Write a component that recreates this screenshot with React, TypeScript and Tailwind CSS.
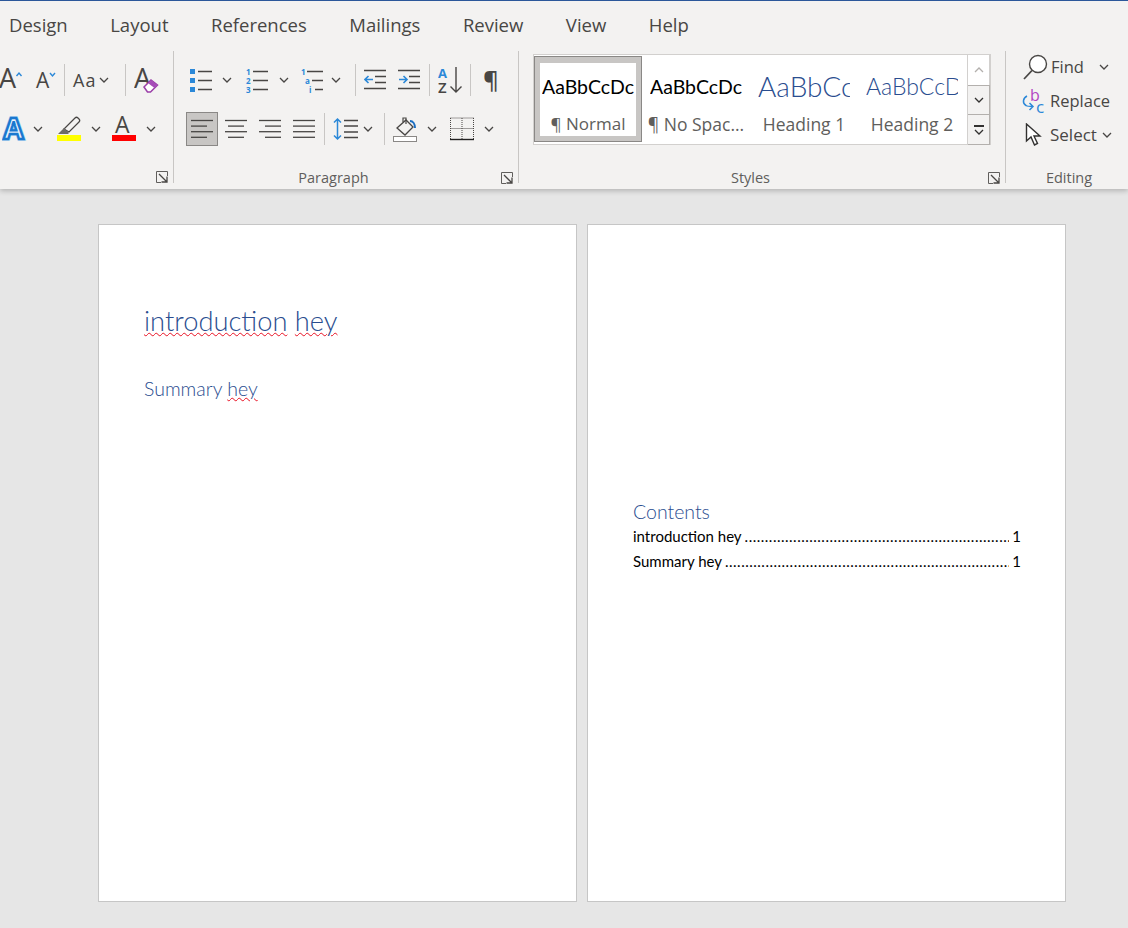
import React from 'react'

const DARK = '#484644'
const BLUE = '#2b88d8'

const tabs = ['Design', 'Layout', 'References', 'Mailings', 'Review', 'View', 'Help']

const Chevron: React.FC<{ className?: string; color?: string }> = ({ className, color = DARK }) => (
  <svg width="10" height="6" viewBox="0 0 10 6" className={className}>
    <path d="M1 1l4 4 4-4" fill="none" stroke={color} strokeWidth="1.3" />
  </svg>
)

const Sep: React.FC<{ className?: string }> = ({ className }) => (
  <div className={`w-px h-[32px] bg-[#c8c6c4] ${className ?? ''}`}></div>
)

const Launcher: React.FC = () => (
  <svg width="12" height="12" viewBox="0 0 12 12" className="justify-self-end">
    <path d="M11.5 5V.5H.5v11H5" fill="none" stroke="#605e5c" />
    <path d="M3 3l7.5 7.5M11 5.5V11H5.5" fill="none" stroke="#484644" strokeWidth="1.3" />
  </svg>
)

const Align: React.FC<{ rows: [number, number][] }> = ({ rows }) => (
  <svg width="22" height="22" viewBox="0 0 22 22">
    {rows.map(([a, b], i) => (
      <path key={i} d={`M${a} ${2.5 + i * 5.6}H${b}`} stroke={DARK} strokeWidth="1.3" />
    ))}
  </svg>
)

const GroupFooter: React.FC<{ label: string; launcher?: boolean; pad?: string; labelPad?: string }> = ({ label, launcher, pad, labelPad }) => (
  <div className={`mt-auto grid grid-cols-[1fr_auto_1fr] items-center h-[12px] ${pad ?? 'pr-[5px]'}`}>
    <span></span>
    <span className={`text-[14.5px] leading-[14px] text-[#605e5c] ${labelPad ?? ''}`}>{label}</span>
    {launcher ? <Launcher /> : <span></span>}
  </div>
)

const StylePreview: React.FC<{ preview: string; label: string; previewClass: string }> = ({ preview, label, previewClass }) => (
  <div className="w-[108px] flex flex-col items-center">
    <div className={`w-[92px] h-[34px] mt-[15px] overflow-hidden whitespace-nowrap flex items-center font-['Lato'] ${previewClass}`}>
      {preview}
    </div>
    <div className="mt-[8px] text-[17.5px] leading-[24px] text-[#605e5c] whitespace-nowrap">{label}</div>
  </div>
)

const squiggle = 'underline decoration-wavy decoration-[#e81123] decoration-[1.3px] underline-offset-1'

export default function App() {
  return (
    <div className="w-[1128px] h-[928px] overflow-hidden bg-[#e6e6e6] font-['Open_Sans',sans-serif]">
      <div className="relative z-10 h-[189px] bg-[#f3f2f1] border-t border-[#2b579a] shadow-[0_2px_5px_rgba(0,0,0,0.22)]">
        <div className="flex gap-[42.5px] pl-[9px] h-[50px] pt-[10px] text-[18.5px] leading-[28px] text-[#484644]">
          {tabs.map((t) => (
            <span key={t}>{t}</span>
          ))}
        </div>

        <div className="flex h-[132px]">
          {/* Font */}
          <div className="w-[174px] border-r border-[#c8c6c4] flex flex-col pt-[5px]">
            <div className="flex items-center h-[48px]">
              <svg width="24" height="30" viewBox="0 0 24 30">
                <text x="-1" y="23" fontSize="27" fill={DARK}>A</text>
                <path d="M16.5 11l2.5-3 2.5 3" fill="none" stroke={BLUE} strokeWidth="1.4" />
              </svg>
              <svg width="22" height="30" viewBox="0 0 22 30" className="ml-[11px]">
                <text x="1" y="23" fontSize="21" fill={DARK}>A</text>
                <path d="M15 8l2.5 3 2.5-3" fill="none" stroke={BLUE} strokeWidth="1.4" />
              </svg>
              <Sep className="ml-[7px]" />
              <span className="ml-[8px] text-[18px] leading-[30px] text-[#484644] tracking-[1px]">Aa</span>
              <Chevron className="ml-[3px]" />
              <Sep className="ml-[16px]" />
              <svg width="26" height="30" viewBox="0 0 26 30" className="ml-[8px]">
                <text x="0" y="23" fontSize="27" fill={DARK}>A</text>
                <path d="M10 22l7-7 6.500 5-7 7h-3z" fill="#fff" stroke="#9b3fa8" strokeWidth="1.5" />
                <path d="M14.500 18.500l6 4.500 3-3-6.500-5z" fill="#a64cb8" />
              </svg>
            </div>
            <div className="flex items-center h-[48px] mt-px">
              <svg width="25" height="28" viewBox="0 0 25 28" className="ml-[2px]">
                <text x="1.5" y="24" fontSize="29" fontWeight="700" fill="none" stroke="#a6d2f2" strokeWidth="3.5">A</text>
                <text x="1.5" y="24" fontSize="29" fontWeight="700" fill="#e8f4fd" stroke="#1b78cf" strokeWidth="2.4">A</text>
              </svg>
              <Chevron className="ml-[6px]" />
              <svg width="26" height="28" viewBox="0 0 26 28" className="ml-[14px]">
                <path d="M7 14L18 3c1-1 2-1 3 0l1 1c1 1 1 2 0 3L12 17z" fill="#f3f2f1" stroke={DARK} strokeWidth="1.2" />
                <path d="M1 19l6-6 5 5-1 1z" fill="#6e6c6a" />
                <rect x="0" y="20" width="24" height="6" fill="#ffff00" />
              </svg>
              <Chevron className="ml-[8px]" />
              <svg width="26" height="28" viewBox="0 0 26 28" className="ml-[11px]">
                <text x="3" y="18" fontSize="23" fill={DARK}>A</text>
                <rect x="0" y="20" width="24" height="6" fill="#ff0000" />
              </svg>
              <Chevron className="ml-[8px]" />
            </div>
            <GroupFooter label="" launcher />
          </div>

          {/* Paragraph */}
          <div className="w-[345px] border-r border-[#c8c6c4] flex flex-col pt-[5px]">
            <div className="flex items-center h-[48px] pl-[15px]">
              <svg width="24" height="26" viewBox="0 0 24 26">
                <rect x="1" y="2" width="5" height="5" fill={BLUE} />
                <rect x="1" y="11" width="5" height="5" fill={BLUE} />
                <rect x="1" y="20" width="5" height="5" fill={BLUE} />
                <path d="M9 4.5h14M9 13.5h14M9 22.5h14" stroke={DARK} strokeWidth="1.3" />
              </svg>
              <Chevron className="ml-[9px]" />
              <svg width="24" height="26" viewBox="0 0 24 26" className="ml-[13px]">
                <text x="1" y="8" fontSize="8" fontWeight="700" fill={BLUE}>1</text>
                <text x="1" y="17" fontSize="8" fontWeight="700" fill={BLUE}>2</text>
                <text x="1" y="26" fontSize="8" fontWeight="700" fill={BLUE}>3</text>
                <path d="M8 4.5h15M8 13.5h15M8 22.5h15" stroke={DARK} strokeWidth="1.3" />
              </svg>
              <Chevron className="ml-[10px]" />
              <svg width="24" height="26" viewBox="0 0 24 26" className="ml-[11px]">
                <text x="1" y="8" fontSize="8" fontWeight="700" fill={BLUE}>1</text>
                <text x="5" y="17" fontSize="8" fontWeight="700" fill={BLUE}>a</text>
                <text x="9" y="26" fontSize="8" fontWeight="700" fill={BLUE}>i</text>
                <path d="M7 4.5h16M12 13.5h11M15 22.5h8" stroke={DARK} strokeWidth="1.3" />
              </svg>
              <Chevron className="ml-[7px]" />
              <Sep className="ml-[14px]" />
              <svg width="24" height="22" viewBox="0 0 24 22" className="ml-[8px]">
                <path d="M0 1.5h22M11 7.5h11M11 13.5h11M0 19.5h22" stroke={DARK} strokeWidth="1.3" />
                <path d="M9 10.5H1M4.5 7l-3.5 3.500L4.5 14" fill="none" stroke={BLUE} strokeWidth="1.6" />
              </svg>
              <svg width="24" height="22" viewBox="0 0 24 22" className="ml-[10px]">
                <path d="M0 1.5h22M11 7.5h11M11 13.5h11M0 19.5h22" stroke={DARK} strokeWidth="1.3" />
                <path d="M1 10.5h8M5.5 7L9 10.5 5.5 14" fill="none" stroke={BLUE} strokeWidth="1.6" />
              </svg>
              <Sep className="ml-[7px]" />
              <svg width="26" height="28" viewBox="0 0 26 28" className="ml-[8px]">
                <text x="0" y="12" fontSize="13" fontWeight="700" fill={BLUE}>A</text>
                <text x="0" y="27" fontSize="15" fontWeight="600" fill={DARK}>Z</text>
                <path d="M18 1v25M12.5 20.5L18 26l5.5-5.5" fill="none" stroke={DARK} strokeWidth="1.4" />
              </svg>
              <Sep className="ml-[6px]" />
              <span className="ml-[12px] text-[24px] leading-[30px] font-semibold text-[#484644]">¶</span>
            </div>
            <div className="flex items-center h-[48px] mt-px pl-[12px]">
              <div className="w-[32px] h-[34px] bg-[#c8c6c4] border border-[#8a8886] flex items-center justify-center">
                <Align rows={[[0, 22], [0, 16], [0, 22], [0, 16]]} />
              </div>
              <div className="ml-[7px]">
                <Align rows={[[0, 22], [3, 19], [0, 22], [3, 19]]} />
              </div>
              <div className="ml-[12px]">
                <Align rows={[[0, 22], [6, 22], [0, 22], [6, 22]]} />
              </div>
              <div className="ml-[12px]">
                <Align rows={[[0, 22], [0, 22], [0, 22], [0, 22]]} />
              </div>
              <Sep className="ml-[9px]" />
              <svg width="28" height="24" viewBox="0 0 28 24" className="ml-[8px]">
                <path d="M4.5 2v20M1 5.5L4.5 2 8 5.5M1 18.5L4.5 22 8 18.5" fill="none" stroke={BLUE} strokeWidth="1.5" />
                <path d="M11 3.5h14M11 9h14M11 15h14M11 20.5h14" stroke={DARK} strokeWidth="1.3" />
              </svg>
              <Chevron className="ml-[2px]" />
              <Sep className="ml-[11px]" />
              <svg width="26" height="26" viewBox="0 0 26 26" className="ml-[8px]">
                <path d="M4 12l9-8 7 7-8 8z" fill="none" stroke={DARK} strokeWidth="1.3" />
                <path d="M10 6V2h3v6" fill="none" stroke={DARK} strokeWidth="1.2" />
                <path d="M17 5c3 0 5 3 5 7" fill="none" stroke="#1b6ec2" strokeWidth="2" />
                <rect x="0.5" y="20.5" width="23" height="5" fill="#fff" stroke="#8a8886" />
              </svg>
              <Chevron className="ml-[8px]" />
              <svg width="24" height="24" viewBox="0 0 24 24" className="ml-[13px]">
                <path d="M.5 1h23M.5 1v21M23.5 1v21M12 1v21M.5 11.500h23" fill="none" stroke={DARK} strokeWidth="1" strokeDasharray="1 1" />
                <path d="M0 22.500h24" stroke="#222" strokeWidth="1.4" />
              </svg>
              <Chevron className="ml-[10px]" />
            </div>
            <GroupFooter label="Paragraph" launcher labelPad="pr-[20px]" />
          </div>

          {/* Styles */}
          <div className="w-[487px] border-r border-[#c8c6c4] flex flex-col pt-[1px]">
            <div className="flex ml-[14px] mt-[2px] h-[91px] w-[458px] border border-[#d2d0ce] bg-white">
              <div className="flex flex-1 items-start">
                <div className="w-[108px] h-[86px] mt-px border border-[#8a8886]">
                  <div className="h-full border-[5px] border-t-[6px] border-[#c8c6c4] flex flex-col items-center">
                    <div className="w-[92px] h-[34px] mt-[7px] overflow-hidden whitespace-nowrap flex items-center font-['Lato'] text-[19.5px] text-black">
                      AaBbCcDc
                    </div>
                    <div className="mt-[8px] text-[17px] leading-[24px] text-[#605e5c]">¶ Normal</div>
                  </div>
                </div>
                <StylePreview preview="AaBbCcDc" label="¶ No Spac..." previewClass="text-[19.5px] text-black" />
                <StylePreview preview="AaBbCc" label="Heading 1" previewClass="pb-[2px] text-[28px] font-light text-[#2a4d8f]" />
                <StylePreview preview="AaBbCcD" label="Heading 2" previewClass="pb-[2px] text-[23px] font-light text-[#2a4d8f]" />
              </div>
              <div className="w-[23px] -my-px flex flex-col border-l border-[#d2d0ce]">
                <div className="h-[31px] flex items-center justify-center border-r border-t border-[#d2d0ce]">
                  <Chevron className="rotate-180" color="#b3b0ad" />
                </div>
                <div className="h-[30px] flex items-center justify-center bg-[#f3f2f1] border border-l-0 border-[#b3b0ad]">
                  <Chevron color="#323130" />
                </div>
                <div className="h-[30px] flex flex-col items-center justify-center gap-[2px] bg-[#f3f2f1] border border-t-0 border-l-0 border-[#b3b0ad]">
                  <div className="w-[10px] h-[2px] bg-[#323130]"></div>
                  <Chevron color="#323130" />
                </div>
              </div>
            </div>
            <GroupFooter label="Styles" launcher labelPad="pr-[18px]" />
          </div>

          {/* Editing */}
          <div className="flex-1 flex flex-col text-[#484644]">
            <div className="flex items-center h-[34px] -mt-px">
              <svg width="25" height="27" viewBox="0 0 25 27" className="ml-[17px]">
                <circle cx="15" cy="10" r="8.500" fill="#fff" stroke={DARK} strokeWidth="1.4" />
                <path d="M9 16.500L1 25" stroke={DARK} strokeWidth="1.8" />
              </svg>
              <span className="ml-[3px] text-[16.5px]">Find</span>
              <Chevron className="ml-[15px]" />
            </div>
            <div className="flex items-center h-[34px]">
              <svg width="24" height="27" viewBox="0 0 24 27" className="ml-[16px]">
                <text x="8" y="13" fontSize="16" fill="#b146c2">b</text>
                <text x="14" y="25" fontSize="17" fill={BLUE}>c</text>
                <path d="M5 8C1 10 0 15 4 17.500c1.500 1 4 1 7 1M7.500 15l3.500 3.500-3.500 3.500" fill="none" stroke={BLUE} strokeWidth="1.5" />
              </svg>
              <span className="ml-[4px] text-[16.5px]">Replace</span>
            </div>
            <div className="flex items-center h-[34px]">
              <svg width="18" height="24" viewBox="0 0 18 24" className="ml-[19px]">
                <path d="M1.500 1v17l4.500-4 3.500 8 3-1.500-3.500-7.500h6z" fill="#fff" stroke="#323130" strokeWidth="1.4" />
              </svg>
              <span className="ml-[7px] text-[17px]">Select</span>
              <Chevron className="ml-[5px]" />
            </div>
            <GroupFooter label="Editing" pad="pr-0" labelPad="pl-[4px]" />
          </div>
        </div>
      </div>

      <div className="flex gap-[10px] pl-[98px] pt-[35px]">
        <div className="w-[479px] h-[678px] bg-white border border-[#c6c6c6] pl-[45px] pt-[77px] font-['Lato']">
          <h1 className="text-[27.3px] leading-[38px] font-light text-[#2a4d8f]">
            <span className={squiggle}>introduction</span> <span className={squiggle}>hey</span>
          </h1>
          <h2 className="mt-[35px] text-[19.5px] leading-[28px] font-light text-[#2a4d8f]">
            Summary <span className={squiggle}>hey</span>
          </h2>
        </div>
        <div className="w-[479px] h-[678px] bg-white border border-[#c6c6c6] pl-[45px] pr-[44px] pt-[274px] font-['Lato']">
          <h2 className="text-[19.5px] leading-[26px] font-light text-[#2a4d8f]">Contents</h2>
          <div className="-mt-px flex items-baseline text-[15px] leading-[25px] text-black">
            <span>introduction hey</span>
            <span className="flex-1 overflow-hidden whitespace-nowrap mx-[3px] tracking-[0.5px]">
              {'.'.repeat(100)}
            </span>
            <span>1</span>
          </div>
          <div className="flex items-baseline text-[15px] leading-[25px] text-black">
            <span>Summary hey</span>
            <span className="flex-1 overflow-hidden whitespace-nowrap mx-[3px] tracking-[0.5px]">
              {'.'.repeat(100)}
            </span>
            <span>1</span>
          </div>
        </div>
      </div>
    </div>
  )
}
